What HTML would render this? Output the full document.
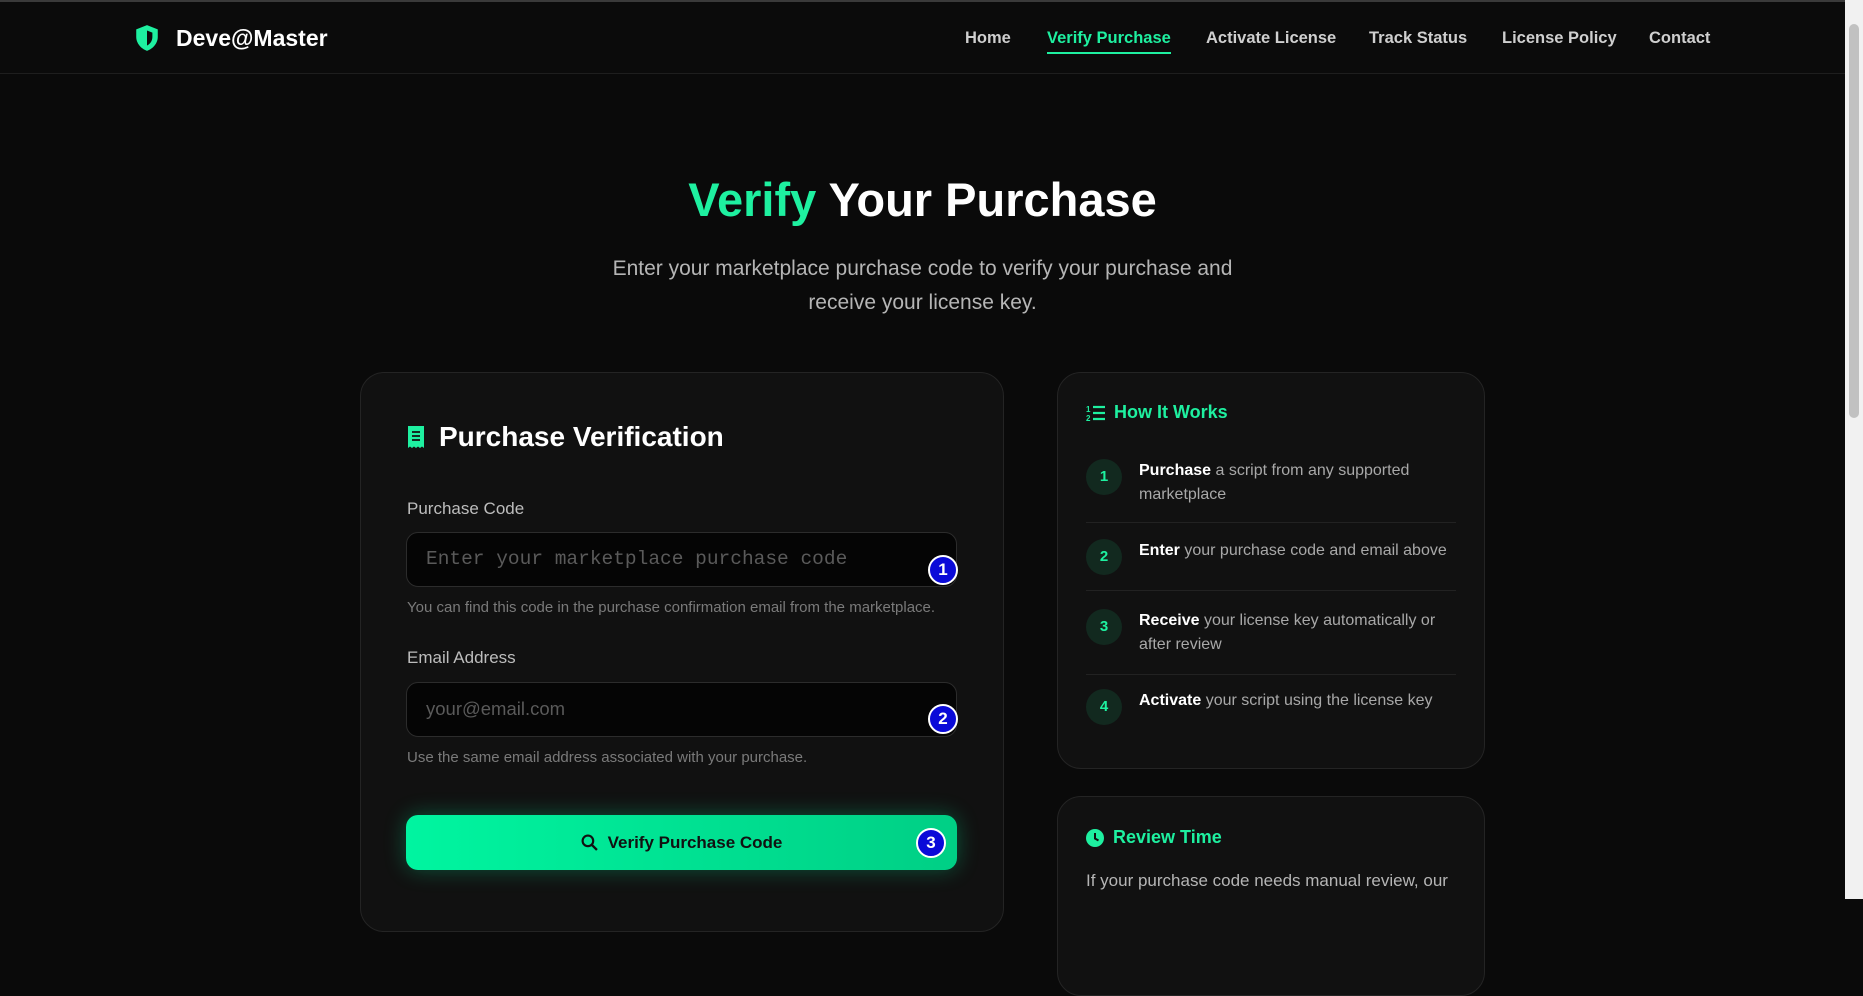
<!DOCTYPE html>
<html><head><meta charset="utf-8"><style>
*{box-sizing:border-box;margin:0;padding:0}
html,body{width:1863px;height:899px;overflow:hidden;background:#0a0a0a;font-family:"Liberation Sans",sans-serif;color:#fff}
.top{position:absolute;left:0;top:0;width:1845px;height:2px;background:#3a3a3a}
nav{position:absolute;left:0;top:2px;width:1845px;height:72px;border-bottom:1px solid #1e1e1e;background:#0b0b0b}
.logo{position:absolute;left:134px;top:22px;display:flex;align-items:center;font-weight:700;font-size:23px}
.logo svg{margin-right:16px}
.links a{position:absolute;top:27px;font-size:16.5px;color:#cfcfcf;text-decoration:none;font-weight:600}
.links a.act{color:#1ef0a0;border-bottom:2px solid #1ef0a0;padding-bottom:4px}
.sb{position:absolute;left:1845px;top:0;width:18px;height:899px;background:#f1f1f1}
.sb .th{position:absolute;left:4px;top:24px;width:10px;height:394px;background:#c1c1c1;border-radius:5px}
h1{position:absolute;left:0;width:1845px;top:172px;text-align:center;font-size:47px;font-weight:700}
h1 span{color:#1ef0a0}
.sub{position:absolute;left:0;width:1845px;top:252px;text-align:center;font-size:21px;line-height:34px;color:#b5b5b5}
.card{position:absolute;background:#111;border:1px solid #242424;border-radius:24px}
.h2{position:absolute;left:46px;top:48px;font-size:28px;font-weight:700;display:flex;align-items:center}
.lab{position:absolute;left:46px;font-size:17px;color:#bdbdbd}
.inp{position:absolute;left:45px;width:551px;height:55px;background:#050505;border:1.5px solid #2c2c2c;border-radius:12px;padding-left:19px;line-height:52px;font-size:17px;color:#5a5a5a}
.help{position:absolute;left:46px;font-size:15px;color:#7a7a7a}
.badge{position:absolute;width:30px;height:30px;border-radius:50%;background:#0a0ad8;border:2.5px solid #fff;color:#fff;font-weight:700;font-size:17px;text-align:center;line-height:25px}
.btn{position:absolute;left:45px;top:442px;width:551px;height:55px;border-radius:12px;background:linear-gradient(90deg,#00f5a0,#00cf85);box-shadow:0 0 22px rgba(0,245,160,.3);color:#111;font-weight:600;font-size:17px;display:flex;align-items:center;justify-content:center}
.ht{position:absolute;left:28px;font-size:18px;font-weight:700;color:#1ef0a0;display:flex;align-items:center}
.item{position:absolute;left:28px;width:370px}
.num{position:absolute;left:0;width:36px;height:36px;border-radius:50%;background:#12291f;color:#1ef0a0;font-weight:700;font-size:15px;text-align:center;line-height:36px}
.it{position:absolute;left:53px;font-size:16px;line-height:24px;color:#a8a8a8;width:310px}
.it b{color:#fff}
.sep{position:absolute;left:28px;width:370px;height:1px;background:#222}
</style></head><body>
<div class="top"></div>
<nav>
<div class="logo"><svg width="26" height="28" viewBox="0 0 24 26"><path d="M12 1L22 5v7c0 6-4.5 11-10 13C6.5 23 2 18 2 12V5z" fill="#1ef0a0"/><path d="M12 6l5 2v4c0 4-2.5 7-5 8z" fill="#0b0b0b"/></svg>Deve@Master</div>
<div class="links">
<a style="left:965px">Home</a><a class="act" style="left:1047px">Verify Purchase</a><a style="left:1206px">Activate License</a><a style="left:1369px">Track Status</a><a style="left:1502px">License Policy</a><a style="left:1649px">Contact</a>
</div>
</nav>
<div class="sb"><div class="th"></div></div>
<h1><span>Verify</span> Your Purchase</h1>
<div class="sub">Enter your marketplace purchase code to verify your purchase and<br>receive your license key.</div>

<div class="card" style="left:360px;top:372px;width:644px;height:560px">
<div class="h2"><svg width="18" height="24" viewBox="0 0 18 24" style="margin-right:14px"><path d="M1 1h16v22l-2-1.5-2 1.5-2-1.5-2 1.5-2-1.5-2 1.5-2-1.5-2 1.5z" fill="#1ef0a0"/><path d="M5 7h8M5 11h8M5 15h8" stroke="#111" stroke-width="1.8"/></svg>Purchase Verification</div>
<div class="lab" style="top:126px">Purchase Code</div>
<div class="inp" style="top:159px;font-family:'Liberation Mono',monospace;font-size:19.5px">Enter your marketplace purchase code</div>
<div class="badge" style="left:567px;top:182px">1</div>
<div class="help" style="top:226px">You can find this code in the purchase confirmation email from the marketplace.</div>
<div class="lab" style="top:275px">Email Address</div>
<div class="inp" style="top:309px;font-size:18.5px">your@email.com</div>
<div class="badge" style="left:567px;top:331px">2</div>
<div class="help" style="top:376px">Use the same email address associated with your purchase.</div>
<div class="btn"><svg width="17" height="17" viewBox="0 0 16 16" style="margin-right:10px"><circle cx="6.5" cy="6.5" r="5" fill="none" stroke="#111" stroke-width="2"/><path d="M10.5 10.5L15 15" stroke="#111" stroke-width="2.2"/></svg>Verify Purchase Code</div>
<div class="badge" style="left:555px;top:455px">3</div>
</div>

<div class="card" style="left:1057px;top:372px;width:428px;height:397px">
<div class="ht" style="top:29px"><svg width="20" height="18" viewBox="0 0 20 18" style="margin-right:8px"><text x="0" y="8" font-size="8" font-weight="700" fill="#1ef0a0" font-family="Liberation Sans">1</text><text x="0" y="17" font-size="8" font-weight="700" fill="#1ef0a0" font-family="Liberation Sans">2</text><path d="M7 3h12M7 9h12M7 15h12" stroke="#1ef0a0" stroke-width="2.2"/></svg>How It Works</div>
<div class="item" style="top:86px"><div class="num">1</div><div class="it" style="top:0px"><b>Purchase</b> a script from any supported marketplace</div></div>
<div class="sep" style="top:149px"></div>
<div class="item" style="top:166px"><div class="num">2</div><div class="it" style="top:0px"><b>Enter</b> your purchase code and email above</div></div>
<div class="sep" style="top:217px"></div>
<div class="item" style="top:236px"><div class="num">3</div><div class="it" style="top:0px"><b>Receive</b> your license key automatically or after review</div></div>
<div class="sep" style="top:301px"></div>
<div class="item" style="top:316px"><div class="num">4</div><div class="it" style="top:0px"><b>Activate</b> your script using the license key</div></div>
</div>

<div class="card" style="left:1057px;top:796px;width:428px;height:200px">
<div class="ht" style="top:30px"><svg width="18" height="18" viewBox="0 0 18 18" style="margin-right:9px"><circle cx="9" cy="9" r="9" fill="#1ef0a0"/><path d="M9 4v5.5l3.5 2" stroke="#111" stroke-width="2" fill="none"/></svg>Review Time</div>
<div class="it" style="left:28px;top:72px;width:380px;font-size:17px;color:#b5b5b5">If your purchase code needs manual review, our</div>
</div>
</body></html>
